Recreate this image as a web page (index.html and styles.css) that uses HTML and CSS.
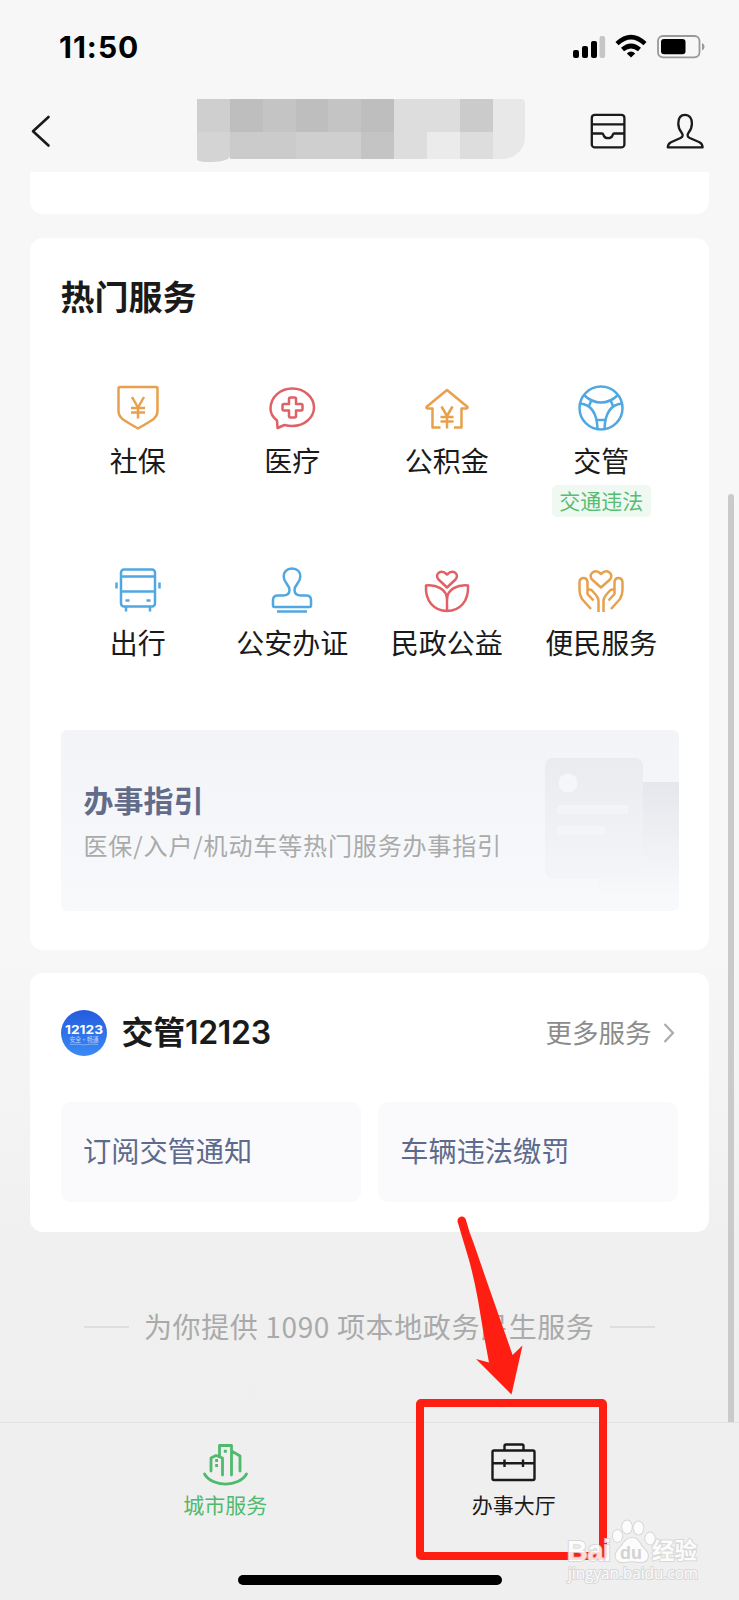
FILE: index.html
```html
<!DOCTYPE html>
<html lang="zh-CN">
<head>
<meta charset="utf-8">
<title>城市服务</title>
<link rel="stylesheet" href="styles.css">
</head>
<body>
<div class="phone">
  <header class="status">
    <span class="time">11:50</span>
    <svg class="status-icons" width="134" height="26" viewBox="572 34 134 26">
      <rect x="573" y="50" width="6" height="8" rx="2"/>
      <rect x="582" y="46" width="6" height="12" rx="2"/>
      <rect x="591" y="41" width="6" height="17" rx="2"/>
      <rect x="599.500" y="36" width="5.600" height="22" rx="2" fill="#c6c6c6"/>
      <g fill="none" stroke="#000" stroke-width="4.600"><path d="M617 43.600Q631 30.500 645 43.600"/><path d="M622.500 49.600Q631 42.400 639.500 49.600"/></g>
      <path d="M626.800 53.500Q631 49.500 635.200 53.500L631 57.500Z"/>
      <rect x="658" y="36" width="41.500" height="21.300" rx="5" fill="none" stroke="#999" stroke-width="1.800"/>
      <rect x="661" y="39" width="24.500" height="15.300" rx="3"/>
      <path d="M702 43Q704.600 44 704.600 46.700Q704.600 49.400 702 50.400Z" fill="#999"/>
    </svg>
  </header>
  <nav class="nav">
    <svg class="back" width="22" height="34" viewBox="30 114 22 34"><path d="M48.500 117L33 131.200L48.500 145.500" fill="none" stroke="#1a1a1a" stroke-width="2.600" stroke-linecap="round" stroke-linejoin="round"/></svg>
    <div class="mosaic">
      <i class="m1"></i><i class="m2"></i><i class="m3"></i><i class="m2"></i><i class="m3"></i><i class="m2"></i><i class="m6"></i><i class="m6"></i><i class="m4"></i><i class="m7"></i>
      <i class="m5 bump"></i><i class="m4"></i><i class="m4"></i><i class="m1"></i><i class="m1"></i><i class="m3"></i><i class="m6"></i><i class="m8"></i><i class="m6"></i><i class="m7"></i>
    </div>
    <svg class="nav-icons" width="116" height="38" viewBox="589 112 116 38">
      <g fill="none" stroke="#1a1a1a" stroke-width="2.300" stroke-linejoin="round">
        <rect x="591.800" y="114.800" width="32.600" height="32.600" rx="3"/>
        <path d="M592 124.300H624M592 133.500H602C603.300 133.500 603.200 134.300 603.800 135.700C605.300 139 610.900 139 612.400 135.700C613 134.300 612.900 133.500 614.200 133.500H624"/>
        <path d="M685 114.800C680.500 114.800 678.300 118.500 678.300 123.500C678.300 127.500 679.500 130 681.500 132.500C683.300 135 683 136.700 680.500 138L671 142.300C668.300 143.600 667.800 145 667.800 147.400H702.600C702.600 145 702.100 143.600 699.500 142.300L689.800 138C687.200 136.700 687 135 688.700 132.500C690.700 130 691.900 127.500 691.900 123.500C691.900 118.500 689.500 114.800 685 114.800Z"/>
      </g>
    </svg>
  </nav>

  <main class="content">
    <section class="card stub"></section>

    <section class="card hot">
      <h2 class="hot-title">热门服务</h2>
      <div class="grid">
        <div class="item orange">
          <svg viewBox="0 0 48 48"><path d="M6 3H42Q43.500 3 43.500 4.500V27Q43.500 32 39 35.500Q32 40 24 44.500Q16 40 9 35.500Q4.500 32 4.500 27V4.500Q4.500 3 6 3Z"/><path d="M18 13L24 23.500L30 13M24 23.500V34.500M17 24H31M17 28.500H31"/></svg>
          <span>社保</span>
        </div>
        <div class="item red">
          <svg viewBox="0 0 48 48"><path d="M9 36.500C4.500 33 2.500 29 2.500 24.500C2.500 13.500 12 4.500 24.300 4.500S46 13.500 46 23.500S36.500 42 24.300 42Q20 42 16.500 41L9.500 44Z"/><path d="M22.500 13.500H26.500Q28 13.500 28 15V20H33Q34.500 20 34.500 21.500V25Q34.500 26.500 33 26.500H28V32Q28 33.500 26.500 33.500H22.500Q21 33.500 21 32V26.500H16Q14.500 26.500 14.500 25V21.500Q14.500 20 16 20H21V15Q21 13.500 22.500 13.500Z"/></svg>
          <span>医疗</span>
        </div>
        <div class="item orange">
          <svg viewBox="0 0 48 48"><path d="M17.500 43.500H9.500V24.500H4.500Q2.500 24 4 22.500L24 6L44 22.500Q45.500 24 43.500 24.500H38.500V43.500H31"/><path d="M18.500 22.500L24 32L29.500 22.500M24 32V44.500M17.500 33H30.500M17.500 37.500H30.500"/></svg>
          <span>公积金</span>
        </div>
        <div class="item blue">
          <svg viewBox="0 0 48 48"><circle cx="24" cy="24" r="21.500"/><path d="M7.500 11.500Q15 18.500 24 18.500T40.500 11.500M3 19.500Q19.500 21 20.500 44.500M45 19.500Q28.500 21 27.500 44.500M14.500 16L12 22M33.500 16L36 22M20 36H28"/></svg>
          <span>交管</span>
          <em class="tag">交通违法</em>
        </div>
        <div class="item blue">
          <svg viewBox="0 0 48 48"><rect x="7" y="3.500" width="34" height="37" rx="3"/><path d="M7 10.500H41M7 25.500H41M2.500 16.500V22.500M45.500 16.500V22.500M11.500 34.500H15.500M32.500 34.500H36.500M12 40.500V45.500M36 40.500V45.500"/></svg>
          <span>出行</span>
        </div>
        <div class="item blue">
          <svg viewBox="0 0 48 48"><path d="M24 2.500C18.500 2.500 15.700 6 15.700 10.500C15.700 17 21.500 18.500 21.500 24C21.500 27.500 19 29.500 15 29.500H10Q5 29.500 5 34V39.500Q5 41 6.500 41H41.500Q43 41 43 39.500V34Q43 29.500 38 29.500H33C29 29.500 26.500 27.500 26.500 24C26.500 18.500 32.300 17 32.300 10.500C32.300 6 29.500 2.500 24 2.500ZM9 45.500H39"/></svg>
          <span>公安办证</span>
        </div>
        <div class="item red">
          <svg viewBox="0 0 48 48"><path d="M24 21.500L15.500 13.500C11 8 18 2.500 24 8.500C30 2.500 37 8 32.500 13.500ZM24 45C11 45 2 35 3 19.500C13 18.500 24 23 24 33.500C24 23 35 18.500 45 19.500C46 35 37 45 24 45ZM24 33V45"/></svg>
          <span>民政公益</span>
        </div>
        <div class="item orange">
          <svg viewBox="0 0 48 48"><path d="M24 21.500L15 13.500C10.500 8 18 2 24 8C30 2 37.500 8 33 13.500ZM21.500 46V35Q21.500 32 19 29L15 24.500Q12.500 22.500 10.500 24.500V16Q10 12 6.500 12T2.500 16V24Q2.500 29 5 33L14 43M10.500 24.500V28L16.500 34.500M26.500 46V35Q26.500 32 29 29L33 24.500Q35.500 22.500 37.500 24.500V16Q38 12 41.500 12T45.500 16V24Q45.500 29 43 33L34 43M37.500 24.500V28L31.500 34.500"/></svg>
          <span>便民服务</span>
        </div>
      </div>
      <div class="banner">
        <div class="banner-copy">
          <h3>办事指引</h3>
          <p>医保/入户/机动车等热门服务办事指引</p>
        </div>
        <svg class="banner-art" width="136" height="145" viewBox="543 752 136 145">
          <defs>
            <linearGradient id="doc" x1="0" y1="0" x2="0" y2="1"><stop offset="0" stop-color="#e9ebef"/><stop offset="1" stop-color="#f3f5f8"/></linearGradient>
            <linearGradient id="back" x1="0" y1="0" x2="0" y2="1"><stop offset="0" stop-color="#e5e7ec"/><stop offset="1" stop-color="#f6f8fa"/></linearGradient>
          </defs>
          <path d="M643 782H679V893H608Q598 893 598 884V878H643Z" fill="url(#back)"/>
          <rect x="545" y="758" width="98" height="121" rx="8" fill="url(#doc)"/>
          <circle cx="568" cy="783" r="9.500" fill="#f5f6f8"/>
          <rect x="557" y="805" width="71" height="9" rx="2" fill="#f3f4f7"/>
          <rect x="557" y="826" width="48" height="9" rx="2" fill="#f4f5f8"/>
        </svg>
      </div>
    </section>

    <section class="card traffic">
      <div class="traffic-head">
        <svg class="logo" width="46" height="46" viewBox="0 0 46 46">
          <defs><linearGradient id="lg" x1="0" y1="0" x2="0" y2="1"><stop offset="0" stop-color="#235bdd"/><stop offset="1" stop-color="#3b8af5"/></linearGradient></defs>
          <circle cx="23" cy="23" r="23" fill="url(#lg)"/>
          <text x="4" y="23.500" textLength="38" lengthAdjust="spacingAndGlyphs" class="logo-num">12123</text>
          <text x="8.500" y="32" textLength="29" lengthAdjust="spacingAndGlyphs" class="logo-sub">安全·畅通</text>
          <path d="M9 34.500Q16 33.500 23 35Q30 33.500 37 34.500" fill="none" stroke="#8fbafa" stroke-width=".8"/>
        </svg>
        <h2>交管12123</h2>
        <span class="more">更多服务</span>
        <svg class="chev" width="14" height="22" viewBox="0 0 14 22"><path d="M2.500 2L11 11L2.500 20" fill="none" stroke="#ababab" stroke-width="2.200"/></svg>
      </div>
      <div class="actions">
        <div class="action">订阅交管通知</div>
        <div class="action">车辆违法缴罚</div>
      </div>
    </section>

    <div class="summary"><i></i><span>为你提供 1090 项本地政务民生服务</span><i></i></div>
  </main>

  <footer class="tabs">
    <div class="tab active">
      <svg width="48" height="48" viewBox="201 1441 48 48"><path d="M211 1471V1458L216 1455.500L222.500 1458V1475M219.500 1456V1445.500H231.500V1475M231.500 1451L240 1456V1471M204.500 1474C212 1487.500 239 1487.500 246.500 1474" stroke-linecap="round"/><path d="M215.200 1460.500H218M215.200 1465.500H218M223.800 1451.200H226.800" stroke-width="3"/></svg>
      <span>城市服务</span>
    </div>
    <div class="tab">
      <svg width="48" height="48" viewBox="490 1441 48 48"><rect x="492.500" y="1450.500" width="42" height="29.500" rx="1.500"/><path d="M504.500 1450V1446Q504.500 1444.500 506 1444.500H522Q523.500 1444.500 523.500 1446V1450M492 1463.300H534.500M504.500 1459.500V1467M523 1459.500V1467"/></svg>
      <span>办事大厅</span>
    </div>
  </footer>

  <div class="scrollbar"></div>
  <div class="home"></div>
  <div class="highlight"></div>
  <svg class="arrow" width="80" height="190" viewBox="450 1210 80 190"><path d="M457.500 1221.500C457 1215.500 465 1214.500 466 1220Q469 1232 473.600 1243L488.800 1287L512.600 1355L522.500 1345.500L511.500 1394.500L476 1359L489 1362.500L483.500 1333L478 1300Q474 1278 469 1260Z" fill="#ff1e12"/></svg>
  <svg class="watermark" width="142" height="72" viewBox="563 1515 142 72">
    <g class="wm" stroke-width="2">
      <text x="567" y="1561" textLength="44" lengthAdjust="spacingAndGlyphs" class="wm-bai">Bai</text>
      <ellipse cx="617.500" cy="1536" rx="4.700" ry="6"/><ellipse cx="627" cy="1527" rx="4.800" ry="6.500"/><ellipse cx="638.500" cy="1528" rx="4.800" ry="6.500"/><ellipse cx="650" cy="1538.500" rx="4.700" ry="6"/>
      <path d="M632 1538C625 1538 624 1544 619 1549C612 1556 617 1563 624 1562Q632 1560.500 639 1562C648 1563 651 1555 644 1549C639 1544 639 1538 632 1538Z"/>
      <text x="652" y="1559" textLength="45" lengthAdjust="spacingAndGlyphs" class="wm-cn">经验</text>
      <text x="568" y="1579" textLength="130" lengthAdjust="spacingAndGlyphs" class="wm-url">jingyan.baidu.com</text>
    </g>
    <text x="620" y="1559" textLength="22" lengthAdjust="spacingAndGlyphs" class="wm-du">du</text>
  </svg>
</div>
</body>
</html>
```
FILE: styles.css
```css
* { box-sizing: border-box; margin: 0; padding: 0; }
html, body { width: 739px; height: 1600px; overflow: hidden; }
body { font-family: "Noto Sans CJK SC", sans-serif; color: #1a1a1a; }
i, em { font-style: normal; }
.phone {
  position: relative; width: 739px; height: 1600px; overflow: hidden;
  display: flex; flex-direction: column;
  background: linear-gradient(#f7f7f7 0, #f7f7f7 950px, #f0f0f0 1240px, #efefef 1600px);
}
.status { height: 94px; flex: none; display: flex; justify-content: space-between; padding: 34px 33px 0 59px; }
.time { font: 700 30px/27px Inter, sans-serif; color: #000; letter-spacing: 1px; }
.status-icons { flex: none; }
.nav { height: 78px; flex: none; display: flex; align-items: flex-start; padding-left: 30px; }
.back { margin-top: 20px; }
.mosaic {
  display: grid; grid-template-columns: repeat(10, 32.85px); grid-template-rows: 33px 27px;
  margin: 4.500px 0 0 145px; width: 328.500px;
}
.mosaic i:nth-child(10) { border-top-right-radius: 4px; }
.mosaic i:last-child { border-bottom-right-radius: 22px; }
.bump { height: 30px; border-radius: 0 0 18px 8px / 0 0 6px 3px; }
.m1 { background: #cfcfcf; }
.m2 { background: #bebebe; }
.m3 { background: #c4c4c4; }
.m4 { background: #cbcbcb; }
.m5 { background: #d4d4d4; }
.m6 { background: #dddddd; }
.m7 { background: #e8e8e8; }
.m8 { background: #ebebeb; }
.nav-icons { margin: 18px 0 0 63.500px; }

.content { flex: none; height: 1250px; padding: 0 30.500px 0 30px; }
.card { background: #fff; border-radius: 13px; }
.stub { height: 42px; border-radius: 0 0 13px 13px; }
.hot { height: 712px; margin-top: 24px; padding: 33px 30px 0 30.500px; }
.hot-title { font-size: 34px; line-height: 50px; font-weight: 700; }
.grid { display: grid; grid-template-columns: repeat(4, 1fr); grid-auto-rows: 182px; margin-top: 63px; }
.item { display: flex; flex-direction: column; align-items: center; }
.item svg { width: 48px; height: 48px; fill: none; stroke: currentColor; stroke-width: 2.5; stroke-linejoin: round; }
.item span { font-size: 28px; line-height: 40px; margin-top: 8px; color: #1a1a1a; white-space: nowrap; }
.orange { color: #e8a04c; }
.red { color: #e06066; }
.blue { color: #4fa8e2; }
.tag {
  margin-top: 4.500px; height: 32px; padding: 0 7.500px; border-radius: 5px;
  background: #eff9f2; color: #57bd72; font-size: 21px; line-height: 30px;
}
.banner {
  height: 181px; margin-top: -18px; border-radius: 6px; overflow: hidden;
  display: flex; justify-content: space-between;
  background: linear-gradient(#f2f4f8, #f8f9fb);
}
.banner-copy { padding: 47px 0 0 23px; }
.banner h3 { font-size: 30px; line-height: 44px; font-weight: 700; color: #626c89; }
.banner p { font-size: 24px; line-height: 36px; margin-top: 5.500px; letter-spacing: .87px; color: #aaa; white-space: nowrap; }
.banner-art { flex: none; margin-top: 22px; }

.traffic { height: 259.500px; margin-top: 22.500px; padding: 37.500px 30.500px 0 30.500px; }
.traffic-head { display: flex; align-items: center; height: 46px; }
.logo { flex: none; }
.logo-num { font: 700 12px Inter, sans-serif; fill: #fff; }
.logo-sub { font: 400 6.500px "Noto Sans CJK SC", sans-serif; fill: #b4d2ff; }
.traffic h2 {
  font-family: Inter, "Noto Sans CJK SC", sans-serif; font-size: 32px; font-weight: 600; line-height: 46px;
  letter-spacing: -.3px; margin-left: 15px; white-space: nowrap;
}
.more { margin: -2px 0 0 auto; font-size: 26.500px; line-height: 40px; color: #8c8c8c; }
.chev { margin: 0 2px 0 10.500px; }
.actions { display: grid; grid-template-columns: 1fr 1fr; gap: 17px; margin-top: 45.500px; }
.action { height: 100px; border-radius: 9px; background: #fafafc; padding-left: 22.500px; font-size: 28.200px; line-height: 95px; color: #5d6a8c; }

.summary { display: flex; align-items: center; justify-content: center; height: 40px; margin-top: 74.500px; gap: 15.500px; color: #aaa; font-size: 28px; line-height: 38px; letter-spacing: .62px; white-space: nowrap; }
.summary span { margin-top: -2px; }
.summary i { width: 45px; height: 2px; background: #dedede; }

.tabs { flex: none; height: 178px; border-top: 1.500px solid #e2e2e2; background: #efefef; display: flex; padding: 17.500px 81px 0; }
.tab { flex: 1; display: flex; flex-direction: column; align-items: center; font-size: 21px; line-height: 31px; }
.tab svg { fill: none; stroke: currentColor; stroke-width: 2.4; stroke-linejoin: round; }
.tab.active svg { stroke-width: 2.8; }
.active { color: #4fba6c; }

.scrollbar { position: absolute; left: 728px; top: 494px; width: 5.500px; height: 928px; border-radius: 3px 3px 0 0; background: #cacaca; }
.home { position: absolute; left: 238px; top: 1575px; width: 264px; height: 10px; border-radius: 5px; background: #000; }
.highlight { position: absolute; left: 416px; top: 1399px; width: 191px; height: 161px; border: 8px solid #ff1e12; border-radius: 5px; }
.arrow { position: absolute; left: 450px; top: 1210px; }
.watermark { position: absolute; left: 563px; top: 1515px; }
.wm { fill: #fff; stroke: #d4d4d4; paint-order: stroke; opacity: .85; }
.wm-bai { font: 700 29px "Liberation Sans", sans-serif; }
.wm-cn { font: 700 23px "Noto Sans CJK SC", sans-serif; }
.wm-url { font: 400 16px "Open Sans", sans-serif; }
.wm-du { font: 700 18px "Liberation Sans", sans-serif; fill: #d2d2d2; }
```
